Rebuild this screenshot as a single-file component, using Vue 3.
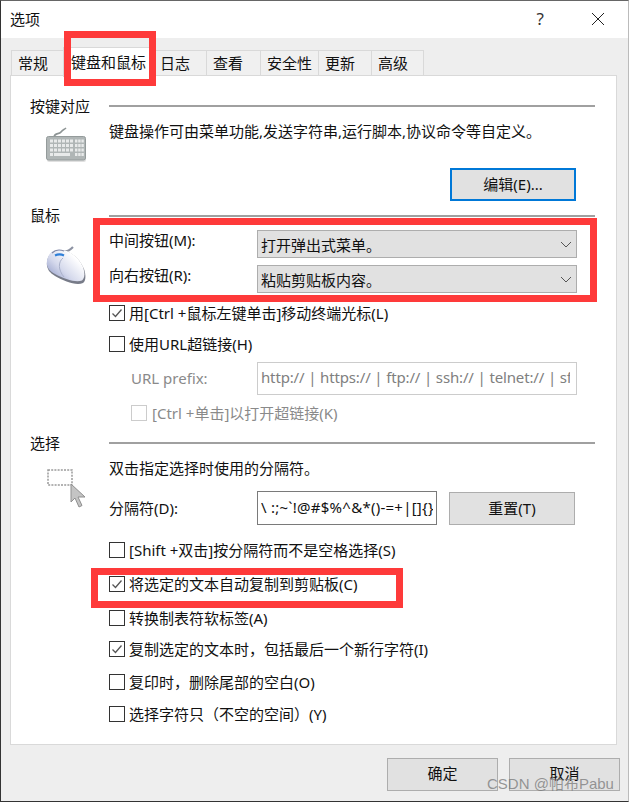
<template>
  <div class="win">
    <header class="titlebar">
      <span class="title">选项</span>
      <span class="help">?</span>
      <svg class="close" width="14" height="14" viewBox="0 0 14 14">
        <path d="M1 1L13 13M13 1L1 13" stroke="#222" stroke-width="1" fill="none" />
      </svg>
    </header>

    <nav class="tabs">
      <div
        v-for="t in tabs"
        :key="t.name"
        class="tab"
        :class="{ active: t.active }"
        :style="{ width: t.width + 'px' }"
      >{{ t.name }}</div>
    </nav>

    <main class="panel">
      <section class="key-sec">
        <div class="head"><span class="head-label">按键对应</span><i class="rule"></i></div>
        <div class="body">
          <div class="icon-col">
            <svg class="kbd" width="42" height="36" viewBox="0 0 42 36">
              <path d="M8 10C9 5 13 8 15 5S18 3 20 1" fill="none" stroke="#8d9494" stroke-width="1.6" />
              <rect x="1" y="11" width="39" height="24" rx="2" fill="#000" opacity=".12" />
              <rect x="0.5" y="9.5" width="39" height="23.5" rx="2" fill="#b0b6b6" stroke="#949b9b" />
              <g fill="#e8eaea">
                <rect v-for="k in keys" :key="k.x + '-' + k.y" :x="k.x" :y="k.y" :width="k.w" height="3" />
              </g>
            </svg>
          </div>
          <div class="content">
            <p class="line desc">键盘操作可由菜单功能,发送字符串,运行脚本,协议命令等自定义。</p>
            <div class="btn-row edit-row"><button class="btn focused">编辑(E)...</button></div>
          </div>
        </div>
      </section>

      <section class="mouse-sec">
        <div class="head"><span class="head-label">鼠标</span><i class="rule"></i></div>
        <div class="body">
          <div class="icon-col">
            <svg class="mouse" width="42" height="42" viewBox="0 0 42 42">
              <defs>
                <linearGradient id="mg" x1="0.05" y1="0.85" x2="0.75" y2="0.25">
                  <stop offset="0" stop-color="#98a2cc" />
                  <stop offset="0.45" stop-color="#d5d9ec" />
                  <stop offset="1" stop-color="#ffffff" />
                </linearGradient>
              </defs>
              <path d="M18 6C21 7 24 5 27 2" fill="none" stroke="#8d93a3" stroke-width="2.200" />
              <path d="M1 21C0 14 4 6 12 5C22 4 33 12 38 24C40 30 40 36 37 38C30 41 18 36 9 31C4 28 2 25 1 21Z" fill="#777b88" />
              <path d="M1 20C0 13 4 5 12 4.500C22 4 32 11 37 22C39 28 39 33 36 35.500C30 38 18 34 9 29C4 26 2 24 1 20Z" fill="url(#mg)" />
              <path d="M6 8C9 5 14 4.500 18 6" fill="none" stroke="#7f88a6" stroke-width="1.200" />
              <path d="M9 10.500C12 9 15 9 18 10.500" fill="none" stroke="#2f7fd8" stroke-width="2" />
              <path d="M17 13C12 17 12 25 18 32" fill="none" stroke="#aab1ca" stroke-width="1" />
            </svg>
          </div>
          <div class="content">
            <div class="field first">
              <label class="field-label raised">中间按钮(M):</label>
              <div class="select">
                <span>打开弹出式菜单。</span>
                <svg width="12" height="7" viewBox="0 0 12 7"><path d="M1 1L6 6L11 1" fill="none" stroke="#555" stroke-width="1" /></svg>
              </div>
            </div>
            <div class="field second">
              <label class="field-label raised">向右按钮(R):</label>
              <div class="select">
                <span>粘贴剪贴板内容。</span>
                <svg width="12" height="7" viewBox="0 0 12 7"><path d="M1 1L6 6L11 1" fill="none" stroke="#555" stroke-width="1" /></svg>
              </div>
            </div>
            <div class="check m10">
              <span class="box"><svg width="14" height="14" viewBox="0 0 14 14"><path d="M2.500 7.500L5.500 10.500L11.500 3.500" fill="none" stroke="#555" stroke-width="1.300" /></svg></span>
              <span class="check-text">用[Ctrl +鼠标左键单击]移动终端光标(L)</span>
            </div>
            <div class="check m11">
              <span class="box"></span>
              <span class="check-text">使用URL超链接(H)</span>
            </div>
            <div class="field url">
              <label class="field-label muted indent">URL prefix:</label>
              <input class="text-input off" readonly value="http:// | https:// | ftp:// | ssh:// | telnet:// | sftp://" />
            </div>
            <div class="check off-check">
              <span class="box off-box"></span>
              <span class="check-text muted">[Ctrl +单击]以打开超链接(K)</span>
            </div>
          </div>
        </div>
      </section>

      <section class="sel-sec">
        <div class="head"><span class="head-label">选择</span><i class="rule"></i></div>
        <div class="body">
          <div class="icon-col">
            <svg class="sel" width="40" height="40" viewBox="0 0 40 40">
              <rect x="1" y="1" width="24" height="15" fill="#fff" stroke="#9a9a9a" stroke-width="1.500" stroke-dasharray="2 1.200" />
              <path d="M24 15L24 33L28 29L32 38L35 36.500L31 28L38 28Z" fill="#c4c4c4" stroke="#8f8f8f" stroke-width="1" />
            </svg>
          </div>
          <div class="content">
            <p class="line desc">双击指定选择时使用的分隔符。</p>
            <div class="field sep">
              <label class="field-label">分隔符(D):</label>
              <input class="text-input dark" readonly value="\ :;~`!@#$%^&amp;*()-=+|[]{}" />
              <button class="btn reset">重置(T)</button>
            </div>
            <div v-for="c in selChecks" :key="c.text" class="check" :class="c.gap">
              <span class="box">
                <svg v-if="c.on" width="14" height="14" viewBox="0 0 14 14"><path d="M2.500 7.500L5.500 10.500L11.500 3.500" fill="none" stroke="#555" stroke-width="1.300" /></svg>
              </span>
              <span class="check-text">{{ c.text }}</span>
            </div>
          </div>
        </div>
      </section>
    </main>

    <footer class="foot">
      <button class="btn dlg">确定</button>
      <button class="btn dlg">取消</button>
    </footer>

    <!-- annotations lying over the dialog -->
    <div class="mark mark-tab"></div>
    <div class="mark mark-fields"></div>
    <div class="mark mark-copy"></div>
    <div class="watermark">CSDN @帕布Pabu</div>
  </div>
</template>

<script setup>
const tabs = [
  { name: '常规', width: 53 },
  { name: '键盘和鼠标', width: 91, active: true },
  { name: '日志', width: 54 },
  { name: '查看', width: 55 },
  { name: '安全性', width: 59 },
  { name: '更新', width: 54 },
  { name: '高级', width: 53 }
]

const selChecks = [
  { text: '[Shift +双击]按分隔符而不是空格选择(S)', gap: 'm15' },
  { text: '将选定的文本自动复制到剪贴板(C)', on: true, gap: 'm14' },
  { text: '转换制表符软标签(A)', gap: 'm14' },
  { text: '复制选定的文本时，包括最后一个新行字符(I)', on: true, gap: 'm11' },
  { text: '复印时，删除尾部的空白(O)', gap: 'm13' },
  { text: '选择字符只（不空的空间）(Y)', gap: 'm12' }
]

// keyboard icon key caps
const keys = []
for (let r = 0; r < 4; r++) {
  for (let c = 0; c < 6; c++) {
    if (r === 3 && c > 0) continue
    keys.push({ x: 4 + c * 4, y: 12.5 + r * 4.5, w: 3 })
  }
  for (let c = 0; c < 3; c++) {
    keys.push({ x: 29 + c * 3.2, y: 12.5 + r * 4.5, w: 2.400 })
  }
}
keys.push({ x: 8, y: 26, w: 16 })
</script>

<style>
html,
body {
  margin: 0;
  background: #eee;
}
</style>

<style scoped>
.win {
  position: relative;
  box-sizing: border-box;
  width: 629px;
  height: 802px;
  overflow: hidden;
  background: #eeeeee;
  border-top: 1px solid #666;
  border-left: 1px solid #333;
  border-right: 1px solid #bbb;
  border-bottom: 1px solid #333;
  font-family: "Noto Sans", "Noto Sans CJK SC", sans-serif;
  font-size: 15px;
  color: #111;
}
.titlebar {
  display: flex;
  align-items: center;
  height: 37px;
  padding: 0 23px 2px 9px;
  box-sizing: border-box;
  background: #fff;
}
.title {
  flex: 1;
}
.help {
  margin-right: 47px;
  font-size: 17px;
  color: #333;
}
.tabs {
  display: flex;
  height: 25px;
  margin-top: 12px;
  padding-left: 11px;
}
.tab {
  box-sizing: border-box;
  height: 25px;
  padding-left: 6px;
  margin-left: -1px;
  line-height: 24px;
  background: #f0f0f0;
  border: 1px solid #d9d9d9;
  border-bottom: none;
  white-space: nowrap;
}
.tab.active {
  position: relative;
  z-index: 1;
  height: 30px;
  margin-top: -3px;
  padding-left: 7px;
  line-height: 29px;
  background: #fff;
}
.panel {
  box-sizing: border-box;
  width: 607px;
  height: 670px;
  margin-left: 9px;
  padding: 20px 21px 0 19px;
  background: #fff;
  border: 1px solid #d9d9d9;
}
.head {
  display: flex;
  align-items: center;
  height: 20px;
  line-height: 20px;
}
.head-label {
  width: 79px;
  flex: none;
  white-space: nowrap;
}
.mouse-sec .head-label {
  margin-bottom: 2px;
}
.rule {
  flex: 1;
  height: 2px;
  background: #a0a0a0;
}
.body {
  display: flex;
}
.icon-col {
  width: 79px;
  flex: none;
}
.content {
  flex: 1;
  min-width: 0;
}
.line {
  height: 20px;
  margin: 5px 0 0;
  line-height: 20px;
  white-space: nowrap;
}
.kbd {
  display: block;
  margin: 11px 0 0 16px;
}
.mouse {
  display: block;
  margin: 19px 0 0 16px;
}
.sel {
  display: block;
  margin: 16px 0 0 17px;
}
.btn-row {
  display: flex;
  justify-content: flex-end;
  padding-right: 19px;
}
.edit-row {
  margin-top: 27px;
}
.btn {
  box-sizing: border-box;
  width: 126px;
  height: 33px;
  padding: 0 0 2px;
  font: inherit;
  color: inherit;
  background: #e1e1e1;
  border: 1px solid #adadad;
}
.btn.focused {
  border: 2px solid #0078d7;
}
.mouse-sec {
  margin-top: 5px;
}
.sel-sec {
  margin-top: 10px;
}
.field {
  display: flex;
  align-items: center;
}
.field.first {
  margin-top: 4px;
}
.field.second {
  margin-top: 7px;
}
.field.url {
  margin-top: 8px;
}
.field.sep {
  margin-top: 13px;
}
.field-label {
  width: 148px;
  flex: none;
  padding-bottom: 1px;
  line-height: 20px;
  white-space: nowrap;
}
.field-label.raised {
  padding-bottom: 8px;
}
.field-label.indent {
  box-sizing: border-box;
  padding-left: 22px;
}
.select {
  box-sizing: border-box;
  display: flex;
  align-items: center;
  justify-content: space-between;
  width: 320px;
  height: 28px;
  padding: 0 4px 0 3px;
  background: #e1e1e1;
  border: 1px solid #adadad;
}
.text-input {
  box-sizing: border-box;
  width: 320px;
  height: 33px;
  padding: 0 6px 3px 3px;
  font: inherit;
  color: #111;
  background: #fff;
  border: 1px solid #ccc;
  outline: none;
}
.text-input.off {
  color: #808080;
  letter-spacing: -0.15px;
}
.text-input.dark {
  width: 180px;
  height: 34px;
  padding: 0 3px 2px;
  letter-spacing: 0.25px;
  border-color: #7a7a7a;
}
.reset {
  margin-left: 12px;
  padding-bottom: 1px;
}
.check {
  display: flex;
  align-items: center;
  gap: 4px;
  height: 20px;
  white-space: nowrap;
}
.check-text {
  padding-bottom: 2px;
}
.sel-sec .check-text {
  padding-bottom: 1px;
}
.box {
  box-sizing: border-box;
  display: flex;
  align-items: center;
  justify-content: center;
  width: 16px;
  height: 16px;
  flex: none;
  background: #fff;
  border: 1px solid #333;
}
.off-check {
  margin-top: 8px;
  padding-left: 22px;
  gap: 5px;
}
.off-box {
  border-color: #ccc;
}
.muted {
  color: #8a8a8a;
}
.m10 { margin-top: 10px; }
.m11 { margin-top: 11px; }
.m12 { margin-top: 12px; }
.m13 { margin-top: 13px; }
.m14 { margin-top: 14px; }
.m15 { margin-top: 15px; }
.foot {
  display: flex;
  justify-content: flex-end;
  gap: 11px;
  margin-top: 13px;
  padding-right: 8px;
}
.btn.dlg {
  width: 111px;
  padding-bottom: 4px;
}
.mark {
  position: absolute;
  z-index: 2;
  box-sizing: border-box;
  border: 7px solid #fe3a3a;
}
.mark-tab {
  left: 63px;
  top: 30px;
  width: 92px;
  height: 55px;
}
.mark-fields {
  left: 92px;
  top: 217px;
  width: 504px;
  height: 84px;
}
.mark-copy {
  left: 90px;
  top: 567px;
  width: 312px;
  height: 40px;
}
.watermark {
  position: absolute;
  z-index: 3;
  left: 486px;
  top: 773px;
  font-family: "Liberation Sans", "Noto Sans CJK SC", sans-serif;
  font-size: 15px;
  line-height: 20px;
  color: rgba(120, 120, 120, 0.75);
  white-space: nowrap;
}
</style>
